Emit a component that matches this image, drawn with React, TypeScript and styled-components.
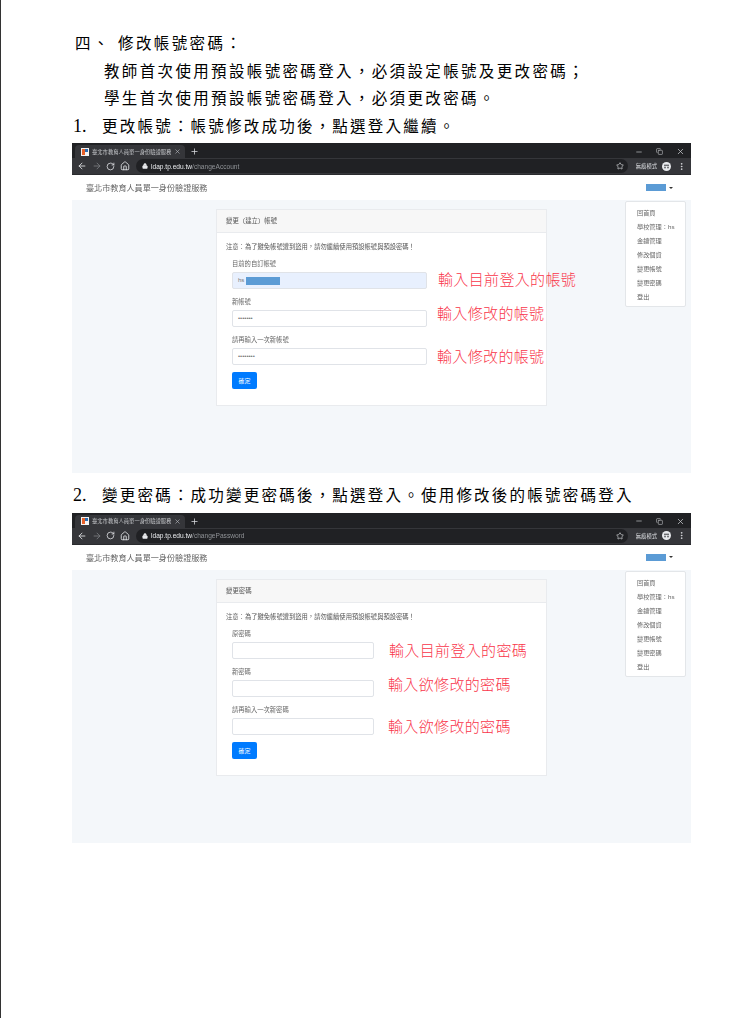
import styled, { createGlobalStyle } from "styled-components";
import {
  ArrowLeft,
  ArrowRight,
  Copy,
  Home,
  Lock,
  Minus,
  MoreVertical,
  Plus,
  RotateCw,
  Star,
  X,
} from "lucide-react";

const GlobalStyle = createGlobalStyle`
  html, body {
    margin: 0;
    padding: 0;
    background: #fff;
  }
`;

const menuItems = ["回首頁", "學校管理：hs", "金鑰管理", "修改個資", "變更帳號", "變更密碼", "登出"];

type Field = {
  label: string;
  note: string;
  noteGap: number;
  noteShift: number;
  value?: string;
  filled?: boolean;
  redacted?: boolean;
};

const accountFields: Field[] = [
  { label: "目前的自訂帳號", note: "輸入目前登入的帳號", noteGap: 11, noteShift: -2, value: "hs", filled: true, redacted: true },
  { label: "新帳號", note: "輸入修改的帳號", noteGap: 10, noteShift: -6, value: "•••••••" },
  { label: "請再輸入一次新帳號", note: "輸入修改的帳號", noteGap: 10, noteShift: -1, value: "••••••••" },
];

const passwordFields: Field[] = [
  { label: "原密碼", note: "輸入目前登入的密碼", noteGap: 15, noteShift: -1 },
  { label: "新密碼", note: "輸入欲修改的密碼", noteGap: 14, noteShift: -5 },
  { label: "請再輸入一次新密碼", note: "輸入欲修改的密碼", noteGap: 14, noteShift: -1 },
];

function BrowserShot(props: { path: string; cardTitle: string; fields: Field[]; inputWidth: number }) {
  return (
    <Shot>
      <TabStrip>
        <Tab>
          <svg width="8" height="8" viewBox="0 0 8 8">
            <rect width="8" height="8" fill="#f4f4f4" />
            <rect x="1" y="1" width="3" height="6" fill="#e8622a" />
            <rect x="4" y="1" width="3" height="3" fill="#2a6fb5" />
          </svg>
          <TabTitle>臺北市教育人員單一身份驗證服務</TabTitle>
          <X size={7} color="#bdc1c6" />
        </Tab>
        <NewTab>
          <Plus size={9} color="#dadce0" />
        </NewTab>
        <WindowControls>
          <Minus size={8} color="#c4c7ca" />
          <Copy size={7} color="#c4c7ca" />
          <X size={9} color="#c4c7ca" />
        </WindowControls>
      </TabStrip>
      <Toolbar>
        <ArrowLeft size={10} color="#e8eaed" />
        <ArrowRight size={10} color="#7b7e82" />
        <RotateCw size={9} color="#e8eaed" />
        <Home size={10} color="#e8eaed" />
        <UrlPill>
          <Lock size={6} color="#e8eaed" fill="#e8eaed" />
          <UrlHost>
            ldap.tp.edu.tw<UrlPath>{props.path}</UrlPath>
          </UrlHost>
          <Star size={8} color="#dadce0" />
        </UrlPill>
        <Incognito>無痕模式</Incognito>
        <Avatar>
          <svg width="9" height="9" viewBox="0 0 9 9">
            <circle cx="4.5" cy="4.5" r="4.5" fill="#e8eaed" />
            <rect x="2" y="2.6" width="5" height="1.4" fill="#6b6d70" />
            <circle cx="3" cy="5.6" r="1" fill="#6b6d70" />
            <circle cx="6" cy="5.6" r="1" fill="#6b6d70" />
          </svg>
        </Avatar>
        <ToolbarMenu>
          <MoreVertical size={9} color="#e8eaed" />
        </ToolbarMenu>
      </Toolbar>
      <Navbar>
        <Brand>臺北市教育人員單一身份驗證服務</Brand>
        <UserToggle>
          <UserRedact />
          <Caret />
        </UserToggle>
        <Menu>
          {menuItems.map((item) => (
            <MenuItem key={item}>{item}</MenuItem>
          ))}
        </Menu>
      </Navbar>
      <PageBody>
        <Card>
          <CardHeader>{props.cardTitle}</CardHeader>
          <CardBody>
            <Notice>注意：為了避免帳號遭到盜用，請勿繼續使用預設帳號與預設密碼！</Notice>
            {props.fields.map((field) => (
              <FieldGroup key={field.label + field.note}>
                <FieldLabel>{field.label}</FieldLabel>
                <FieldRow>
                  <InputBox $width={props.inputWidth} $filled={field.filled}>
                    {field.value}
                    {field.redacted && <InputRedact />}
                  </InputBox>
                  <Note $gap={field.noteGap} $shift={field.noteShift}>
                    {field.note}
                  </Note>
                </FieldRow>
              </FieldGroup>
            ))}
            <Submit>確定</Submit>
          </CardBody>
        </Card>
      </PageBody>
    </Shot>
  );
}

export default function App() {
  return (
    <Sheet>
      <GlobalStyle />
      <Heading>
        <HeadingMark>四、</HeadingMark>修改帳號密碼：
      </Heading>
      <IndentLine>教師首次使用預設帳號密碼登入，必須設定帳號及更改密碼；</IndentLine>
      <IndentLine>學生首次使用預設帳號密碼登入，必須更改密碼。</IndentLine>
      <StepLine>
        <StepNumber>1.</StepNumber>更改帳號：帳號修改成功後，點選登入繼續。
      </StepLine>
      <BrowserShot
        path="/changeAccount"
        cardTitle="變更（建立）帳號"
        fields={accountFields}
        inputWidth={195}
      />
      <StepLine $top={9}>
        <StepNumber>2.</StepNumber>變更密碼：成功變更密碼後，點選登入。使用修改後的帳號密碼登入
      </StepLine>
      <BrowserShot path="/changePassword" cardTitle="變更密碼" fields={passwordFields} inputWidth={142} />
    </Sheet>
  );
}

const Sheet = styled.div`
  box-sizing: border-box;
  width: 752px;
  height: 1018px;
  padding: 30px 61px 0 71px;
  border-left: 1px solid #333;
  background: #fff;
  overflow: hidden;
  color: #000;
  font-family: "Liberation Serif", "Noto Sans CJK TC", serif;
`;

const DocLine = styled.div`
  height: 27.5px;
  line-height: 27.5px;
  font-size: 15.5px;
  letter-spacing: 2.35px;
  white-space: nowrap;
`;

const Heading = styled(DocLine)`
  padding-left: 3px;
  letter-spacing: 2.4px;
`;

const HeadingMark = styled.span`
  display: inline-block;
  width: 43px;
`;

const IndentLine = styled(DocLine)`
  padding-left: 32px;
`;

const StepLine = styled(DocLine)<{ $top?: number }>`
  margin-top: ${(props) => props.$top ?? 0}px;
  margin-bottom: 3px;
  padding-left: 1px;
  letter-spacing: 2.22px;
`;

const StepNumber = styled.span`
  display: inline-block;
  width: 29px;
  font-size: 18px;
  letter-spacing: 0;
`;

const Shot = styled.div`
  width: 619px;
  height: 330px;
  display: flex;
  flex-direction: column;
  background: #f4f7fa;
  font-family: "Liberation Sans", "Noto Sans CJK TC", sans-serif;
`;

const TabStrip = styled.div`
  height: 15px;
  flex: none;
  display: flex;
  align-items: flex-end;
  padding-left: 3px;
  background: #202124;
`;

const Tab = styled.div`
  box-sizing: border-box;
  width: 110px;
  height: 13px;
  display: flex;
  align-items: center;
  gap: 3px;
  padding: 0 4px 0 6px;
  border-radius: 4px 4px 0 0;
  background: #35363a;
  filter: blur(0.3px);
`;

const TabTitle = styled.span`
  flex: 1;
  overflow: hidden;
  white-space: nowrap;
  font-size: 5.3px;
  color: #c8cacd;
`;

const NewTab = styled.div`
  height: 13px;
  display: flex;
  align-items: center;
  margin-left: 5px;
`;

const WindowControls = styled.div`
  margin-left: auto;
  width: 50px;
  height: 13px;
  display: flex;
  align-items: center;
  justify-content: space-between;
  margin-right: 6px;
`;

const Toolbar = styled.div`
  box-sizing: border-box;
  height: 17px;
  flex: none;
  display: flex;
  align-items: center;
  gap: 4.5px;
  padding: 0 5px;
  background: #35363a;
  border-bottom: 1px solid #2a2b2e;
`;

const UrlPill = styled.div`
  flex: 1;
  height: 14px;
  display: flex;
  align-items: center;
  gap: 3px;
  padding: 0 4px 0 6px;
  margin-left: 2px;
  border-radius: 7px;
  background: #202124;
`;

const UrlHost = styled.span`
  flex: 1;
  font-size: 6.6px;
  color: #e8eaed;
  filter: blur(0.25px);
`;

const UrlPath = styled.span`
  color: #8f9296;
`;

const Incognito = styled.span`
  margin-left: 3.5px;
  font-size: 5.3px;
  color: #dfe1e5;
  filter: blur(0.3px);
`;

const Avatar = styled.div`
  display: flex;
`;

const ToolbarMenu = styled.div`
  display: flex;
  margin-left: 2px;
`;

const Navbar = styled.div`
  position: relative;
  box-sizing: border-box;
  height: 25px;
  flex: none;
  display: flex;
  align-items: center;
  justify-content: space-between;
  padding: 0 18px 0 14px;
  background: #fff;
`;

const Brand = styled.span`
  font-size: 8.1px;
  color: #666;
  filter: blur(0.3px);
`;

const UserToggle = styled.div`
  display: flex;
  align-items: center;
  gap: 3px;
`;

const UserRedact = styled.span`
  width: 20px;
  height: 7px;
  background: #5b9bd5;
`;

const Caret = styled.span`
  width: 0;
  height: 0;
  border-left: 2px solid transparent;
  border-right: 2px solid transparent;
  border-top: 2.5px solid #333;
`;

const Menu = styled.div`
  position: absolute;
  z-index: 1;
  top: 26px;
  right: 5px;
  box-sizing: border-box;
  width: 61px;
  height: 106px;
  padding: 4px 0 0 11px;
  border: 1px solid #e3e6e9;
  border-radius: 2px;
  background: #fff;
`;

const MenuItem = styled.div`
  height: 14px;
  line-height: 14px;
  font-size: 6.2px;
  color: #666;
  white-space: nowrap;
  filter: blur(0.3px);
`;

const PageBody = styled.div`
  flex: 1;
  padding: 9px 0 0 144px;
`;

const Card = styled.div`
  box-sizing: border-box;
  width: 331px;
  height: 197px;
  border: 1px solid #e9ebee;
  background: #fff;
`;

const CardHeader = styled.div`
  box-sizing: border-box;
  height: 23px;
  line-height: 22px;
  padding-left: 9px;
  border-bottom: 1px solid #e9ebee;
  background: #f7f7f7;
  font-size: 6.4px;
  color: #555;
  filter: blur(0.25px);
`;

const CardBody = styled.div`
  padding: 9px 0 0 9px;
`;

const Notice = styled.div`
  height: 10px;
  line-height: 10px;
  font-size: 6.3px;
  color: #555;
  margin-bottom: 6px;
  filter: blur(0.25px);
`;

const FieldGroup = styled.div`
  height: 38px;
  margin-left: 6px;
`;

const FieldLabel = styled.div`
  height: 14px;
  line-height: 12px;
  font-size: 6.3px;
  color: #666;
  filter: blur(0.25px);
`;

const FieldRow = styled.div`
  display: flex;
  align-items: center;
  height: 17px;
`;

const InputBox = styled.div<{ $width: number; $filled?: boolean }>`
  position: relative;
  box-sizing: border-box;
  flex: none;
  width: ${(props) => props.$width}px;
  height: 17px;
  line-height: 15px;
  padding-left: 5px;
  border: 1px solid #e0e3e8;
  border-radius: 2px;
  background: ${(props) => (props.$filled ? "#e8f0fe" : "#fff")};
  font-size: 6px;
  color: #777;
`;

const InputRedact = styled.span`
  position: absolute;
  top: 4px;
  left: 13px;
  width: 34px;
  height: 8px;
  background: #5b9bd5;
`;

const Note = styled.span<{ $gap: number; $shift: number }>`
  margin-left: ${(props) => props.$gap}px;
  transform: translateY(${(props) => props.$shift}px);
  font-family: "Liberation Serif", "Noto Sans CJK TC", serif;
  font-size: 15px;
  font-weight: 300;
  letter-spacing: 0.35px;
  color: #f9354a;
  white-space: nowrap;
`;

const Submit = styled.button`
  display: block;
  width: 25px;
  height: 17px;
  margin: 0 0 0 6px;
  padding: 0;
  border: none;
  border-radius: 2px;
  background: #007bff;
  font-family: inherit;
  font-size: 6px;
  color: #fff;
`;
